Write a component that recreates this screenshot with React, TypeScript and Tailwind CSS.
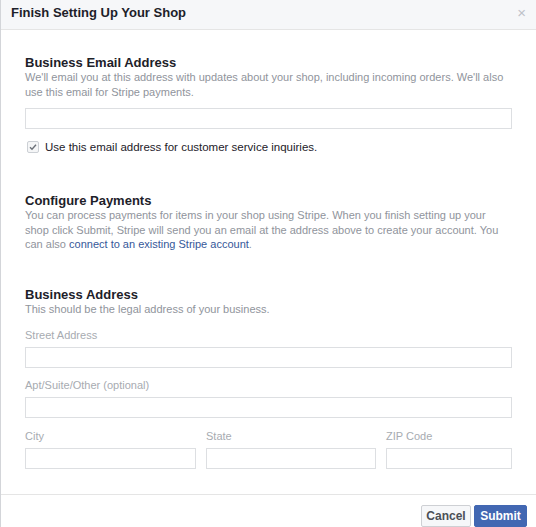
const font = { fontFamily: '"Liberation Sans", Arial, Helvetica, sans-serif' }

function Field({ label, className = '' }: { label?: string; className?: string }) {
  return (
    <div className={className}>
      {label && <div className="text-[11px] leading-[14px] text-[#a7abb1] mb-[5px]">{label}</div>}
      <input className="block w-full h-[21px] border border-[#dddfe2] bg-white outline-none" />
    </div>
  )
}

export default function App() {
  return (
    <div className="w-[536px] h-[527px] bg-white flex flex-col border-l border-[#d3d5d9] overflow-hidden" style={font}>
      {/* Header */}
      <div className="h-[30px] shrink-0 bg-[#f6f7f9] border-b border-[#e5e5e5] flex items-start justify-between pl-[10px] pr-[10px] pt-[5px]">
        <span className="text-[13px] leading-[15px] font-bold text-[#1d2129]">Finish Setting Up Your Shop</span>
        <span className="text-[15px] leading-[15px] text-[#bec2c9]">×</span>
      </div>

      {/* Body */}
      <div className="flex-1 px-[24px] pt-[26px]">
        <h2 className="text-[13px] font-bold text-[#1d2129] leading-[14px]">Business Email Address</h2>
        <p className="text-[11px] leading-[15px] text-[#90949c]">
          We'll email you at this address with updates about your shop, including incoming orders. We'll also use this email for Stripe payments.
        </p>
        <Field className="mt-[8px]" />
        <label className="flex items-center gap-[6px] mt-[11px] ml-[2px] text-[11.5px] leading-[14px] text-[#1d2129]">
          <span className="w-[12px] h-[12px] border border-[#ccd0d5] rounded-[2px] bg-[#f5f6f7] flex items-center justify-center">
            <svg width="8" height="8" viewBox="0 0 8 8">
              <path d="M1 4.2 L3 6.2 L7 1.8" fill="none" stroke="#6b7078" strokeWidth="1.4" />
            </svg>
          </span>
          Use this email address for customer service inquiries.
        </label>

        <h2 className="mt-[40px] text-[13px] font-bold text-[#1d2129] leading-[14px]">Configure Payments</h2>
        <p className="text-[11px] leading-[14.5px] text-[#90949c]">
          You can process payments for items in your shop using Stripe. When you finish setting up your shop click Submit, Stripe will send you an email at the address above to create your account. You can also{' '}
          <a className="text-[#365899]">connect to an existing Stripe account</a>.
        </p>

        <h2 className="mt-[36px] text-[13px] font-bold text-[#1d2129] leading-[14px]">Business Address</h2>
        <p className="text-[11px] leading-[15px] text-[#90949c]">This should be the legal address of your business.</p>
        <Field label="Street Address" className="mt-[11px]" />
        <Field label="Apt/Suite/Other (optional)" className="mt-[10px]" />
        <div className="mt-[11px] flex gap-[10px]">
          <Field label="City" className="w-[171px]" />
          <Field label="State" className="w-[170px]" />
          <Field label="ZIP Code" className="flex-1" />
        </div>
      </div>

      {/* Footer */}
      <div className="h-[33px] shrink-0 border-t border-[#e5e5e5] flex items-start justify-end gap-[3px] pr-[9px] pt-[10px]">
        <button className="h-[22px] w-[50px] border border-[#ced0d4] rounded-[2px] bg-[#f6f7f9] text-[12px] font-bold text-[#4b4f56]">Cancel</button>
        <button className="h-[22px] w-[53px] border border-[#4267b2] rounded-[2px] bg-[#4267b2] text-[12px] font-bold text-white">Submit</button>
      </div>
    </div>
  )
}
